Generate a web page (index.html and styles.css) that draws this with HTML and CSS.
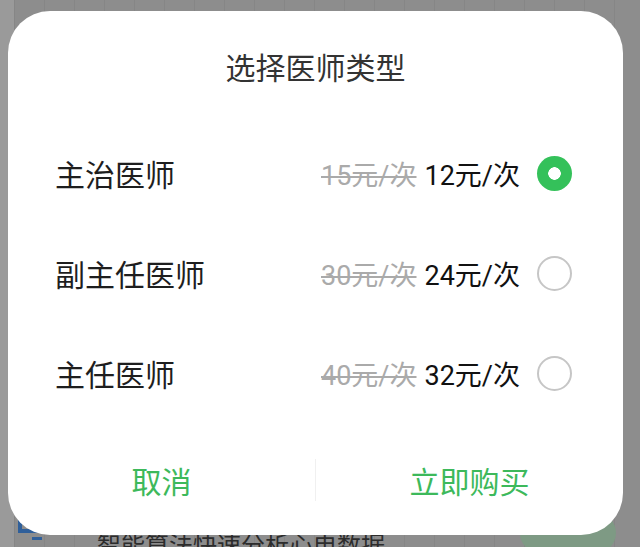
FILE: index.html
```html
<!DOCTYPE html>
<html lang="zh-CN">
<head>
<meta charset="utf-8">
<title>选择医师类型</title>
<link rel="stylesheet" href="styles.css">
</head>
<body>
<div class="page">
  <div class="page-item">
    <svg class="item-icon" width="26" height="28" viewBox="0 0 26 28"><path d="M2 0 V18 H24" fill="none" stroke="#2f5f9a" stroke-width="4"/><rect x="14" y="24" width="10" height="3" fill="#2f5f9a"/></svg>
    <span class="item-text">智能算法快速分析心电数据</span>
    <span class="item-btn"></span>
  </div>
</div>
<div class="overlay">
  <div class="dialog">
    <div class="dialog-title">选择医师类型</div>
    <ul class="options">
      <li class="option">
        <span class="opt-name">主治医师</span>
        <span class="opt-old">15元/次</span>
        <span class="opt-price">12元/次</span>
        <span class="radio radio-on"></span>
      </li>
      <li class="option">
        <span class="opt-name">副主任医师</span>
        <span class="opt-old">30元/次</span>
        <span class="opt-price">24元/次</span>
        <span class="radio"></span>
      </li>
      <li class="option">
        <span class="opt-name">主任医师</span>
        <span class="opt-old">40元/次</span>
        <span class="opt-price">32元/次</span>
        <span class="radio"></span>
      </li>
    </ul>
    <div class="dialog-actions">
      <button class="action">取消</button>
      <span class="action-divider"></span>
      <button class="action">立即购买</button>
    </div>
  </div>
</div>
</body>
</html>
```
FILE: styles.css
```css
html, body {
  margin: 0;
  padding: 0;
}
body {
  width: 640px;
  height: 547px;
  overflow: hidden;
  font-family: "Noto Sans CJK SC", "Noto Sans", sans-serif;
  background: #8d8d8d;
}
.page {
  height: 547px;
  display: flex;
  flex-direction: column;
  justify-content: flex-end;
  background-color: #8d8d8d;
  background-image: repeating-linear-gradient(90deg, rgba(0,0,0,0.05) 0 1px, transparent 1px 30px);
  border-left: 14px solid #9a9a9a;
  box-sizing: border-box;
}
.page-item {
  height: 34px;
  display: flex;
  align-items: flex-start;
  padding-left: 4px;
}
.item-icon {
  flex: none;
}
.item-text {
  margin-left: 53px;
  margin-top: 16px;
  font-size: 24px;
  line-height: 30px;
  color: #2c2c2c;
  white-space: nowrap;
}
.item-btn {
  margin-left: auto;
  margin-right: 24px;
  width: 96px;
  height: 40px;
  border-radius: 20px;
  background: #7e9a84;
}
.overlay {
  position: fixed;
  inset: 0;
}
.dialog {
  margin: 11px 0 0 8px;
  width: 615px;
  height: 524px;
  background: #fff;
  border-radius: 42px;
  display: flex;
  flex-direction: column;
}
.dialog-title {
  padding-top: 35px;
  line-height: 40px;
  font-size: 30px;
  text-align: center;
  color: #333;
}
.options {
  list-style: none;
  margin: 37px 0 0;
  padding: 0;
}
.option {
  height: 100px;
  display: flex;
  align-items: center;
  padding: 0 51px 0 47px;
}
.opt-name {
  font-size: 30px;
  color: #1e1e1e;
  margin-right: auto;
}
.opt-old, .opt-price {
  font-family: Roboto, "Noto Sans CJK SC", sans-serif;
  font-size: 27px;
}
.opt-old {
  color: #aaa;
  text-decoration: line-through;
  text-decoration-thickness: 2px;
  margin-right: 8px;
}
.opt-price {
  color: #111;
  margin-right: 17px;
}
.radio {
  width: 31px;
  height: 31px;
  border: 2px solid #c6c6c6;
  border-radius: 50%;
  box-sizing: content-box;
  flex: none;
}
.radio-on {
  width: 35px;
  height: 35px;
  border: none;
  background: radial-gradient(circle, #fff 0 6px, #34c15a 6.5px);
}
.dialog-actions {
  margin-top: 25px;
  height: 64px;
  display: flex;
  align-items: center;
}
.action {
  flex: 1;
  border: none;
  background: none;
  padding: 0;
  font-family: inherit;
  font-size: 30px;
  line-height: 64px;
  color: #3db95b;
}
.action-divider {
  width: 1px;
  height: 42px;
  background: #f0f0f0;
}
```
